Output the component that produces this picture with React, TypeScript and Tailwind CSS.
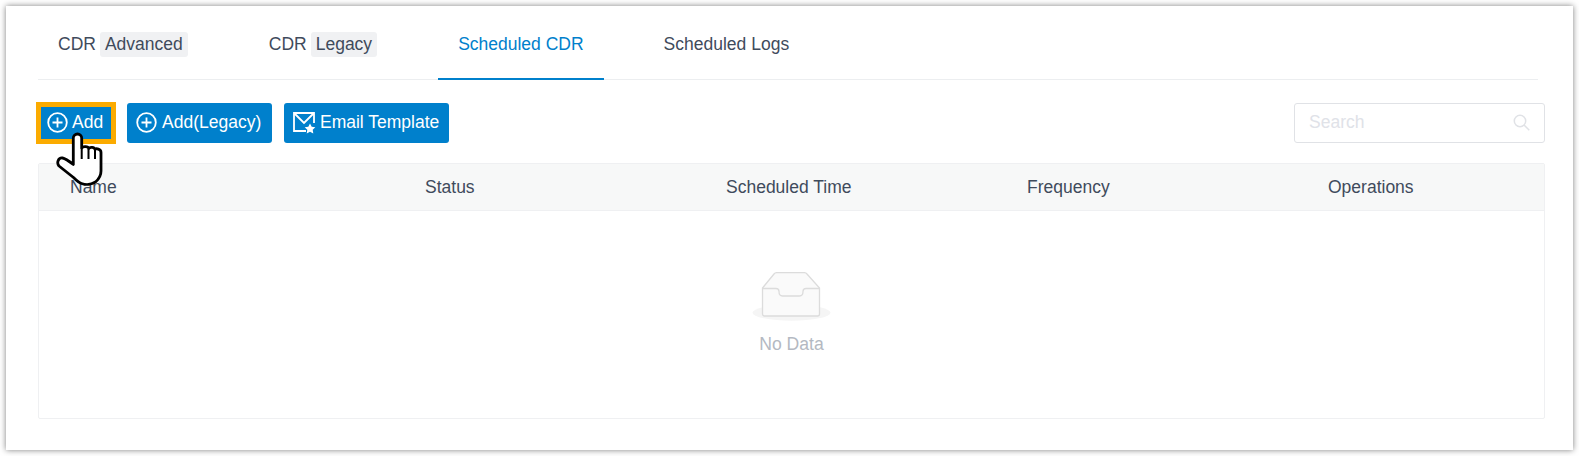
import React from "react";

function PlusCircle() {
  return (
    <svg width="21" height="21" viewBox="0 0 21 21" fill="none" stroke="white" strokeWidth="1.8" className="shrink-0">
      <circle cx="10.5" cy="10.5" r="9.3" />
      <path d="M10.5 5.5v10M5.5 10.5h10" />
    </svg>
  );
}

function MailStar() {
  return (
    <svg width="23" height="22" viewBox="0 0 23 22" fill="none" className="shrink-0">
      <path d="M13 19H1V1h20v10" stroke="white" strokeWidth="1.8" />
      <path d="M1.5 1.5 11 11l9.5-9.5" stroke="white" strokeWidth="1.8" />
      <path d="M17 11.5l1.7 3.3 3.6.5-2.6 2.5.6 3.6-3.3-1.7-3.3 1.7.6-3.6-2.6-2.5 3.6-.5z" fill="white" />
    </svg>
  );
}

function Hand() {
  return (
    <svg width="50" height="56" viewBox="56 132 50 56" className="absolute left-[56px] top-[132px]">
      <path
        d="M73.3 138.2a4.2 4.2 0 0 1 8.4 0V148c1-2 6.5-2 7 .5c1-1.8 5.8-1.5 6.3 1c1-1.3 6-.8 6 3V171c0 4-2 8-5.5 11c-4 2.5-10 3-14 1.5c-3-1-5-3-8-6L59 166c-2.500-3-1-8.500 3.500-8c3 .5 7 3.500 10.800 6.500z"
        fill="white"
        stroke="black"
        strokeWidth="2.8"
        strokeLinejoin="round"
      />
      <path d="M81.7 148v11M88.5 149v10M95 150v9" stroke="black" strokeWidth="2" fill="none" />
    </svg>
  );
}

function Tab({ label, tag, active, extra }: { label: string; tag?: string; active?: boolean; extra?: string }) {
  return (
    <div
      className={
        "h-[74px] -mb-px px-5 pt-1 flex items-center gap-1 border-b-2 " +
        (active ? "border-[#0080cc] text-[#0080cc] " : "border-transparent ") +
        (extra ?? "")
      }
    >
      <span>{label}</span>
      {tag && <span className="bg-[#f0f1f3] rounded-[3px] px-[5px] h-[25px] flex items-center">{tag}</span>}
    </div>
  );
}

const btn = "h-10 bg-[#0080cc] rounded-[3px] text-white flex items-center pb-[1px]";

export default function App() {
  return (
    <div className="relative w-[1579px] h-[456px] p-[6px] bg-white overflow-hidden font-['Liberation_Sans',Arial,sans-serif] text-[17.5px] text-[#3f4b5c]">
      <div className="h-[444px] bg-white shadow-[0_0_6px_rgba(0,0,0,0.5)] pl-8 pr-7 pt-0">
        <div className="flex gap-[41px] border-b border-[#eceef0] mr-[7px] h-[74px]">
          <Tab label="CDR" tag="Advanced" />
          <Tab label="CDR" tag="Legacy" />
          <Tab label="Scheduled CDR" active />
          <Tab label="Scheduled Logs" extra="-ml-[1px]" />
        </div>

        <div className="flex items-center justify-between mt-[22px]">
          <div className="flex items-center">
            <div className="border-[5px] border-[#fbab00] -ml-[2px] w-[80px] h-[42px] bg-[#0080cc] flex items-center pl-[6px] pb-[1px] gap-1 text-white">
              <PlusCircle />
              <span>Add</span>
            </div>
            <div className={btn + " w-[145px] ml-[11px] pl-[9px] gap-[5px]"}>
              <PlusCircle />
              <span>Add(Legacy)</span>
            </div>
            <div className={btn + " w-[165px] ml-[12px] pl-[9px] gap-1"}>
              <MailStar />
              <span>Email Template</span>
            </div>
          </div>
          <div className="w-[251px] h-10 border border-[#e0e2e6] rounded-[3px] flex items-center justify-between pl-[14px] pr-[14px] pb-[1px]">
            <span className="text-[#e0e2e8]">Search</span>
            <svg width="17" height="17" viewBox="0 0 17 17" fill="none" stroke="#e0e2e6" strokeWidth="1.5">
              <circle cx="7" cy="7" r="5.7" />
              <path d="M11 11l5.3 5.3" />
            </svg>
          </div>
        </div>

        <div className="mt-[19px] h-[256px] border border-[#eff0f2] rounded-[2px] flex flex-col">
          <div className="h-[47px] shrink-0 bg-[#f7f8f8] border-b border-[#eff0f2] grid grid-cols-[354px_301px_301px_301px_1fr] items-center">
            <span className="pl-[31px]">Name</span>
            <span className="pl-[32px]">Status</span>
            <span className="pl-[32px]">Scheduled Time</span>
            <span className="pl-[32px]">Frequency</span>
            <span className="pl-[32px]">Operations</span>
          </div>
          <div className="flex-1 flex flex-col items-center pt-[60px]">
            <svg width="80" height="52" viewBox="0 0 80 52" fill="none">
              <ellipse cx="39.5" cy="41.7" rx="39" ry="8" fill="#f5f5f5" />
              <path d="M10.5 17L22 3a3.5 3.5 0 0 1 2.5-1.3h28a3.5 3.5 0 0 1 2.5 1.3L67.5 17v26a2 2 0 0 1-2 2h-53a2 2 0 0 1-2-2z" fill="#fafafa" stroke="#dcdcdc" strokeWidth="1.3" />
              <path d="M10.5 17.5H24c2 0 3 1 3 3c0 3 1 4.5 3.5 4.5h17c2.5 0 3.5-1.5 3.5-4.5c0-2 1-3 3-3h13.500" fill="none" stroke="#dcdcdc" strokeWidth="1.3" />
            </svg>
            <span className="mt-[8px] text-[#b4b9c2] text-[17.6px]">No Data</span>
          </div>
        </div>
      </div>
      <Hand />
    </div>
  );
}
